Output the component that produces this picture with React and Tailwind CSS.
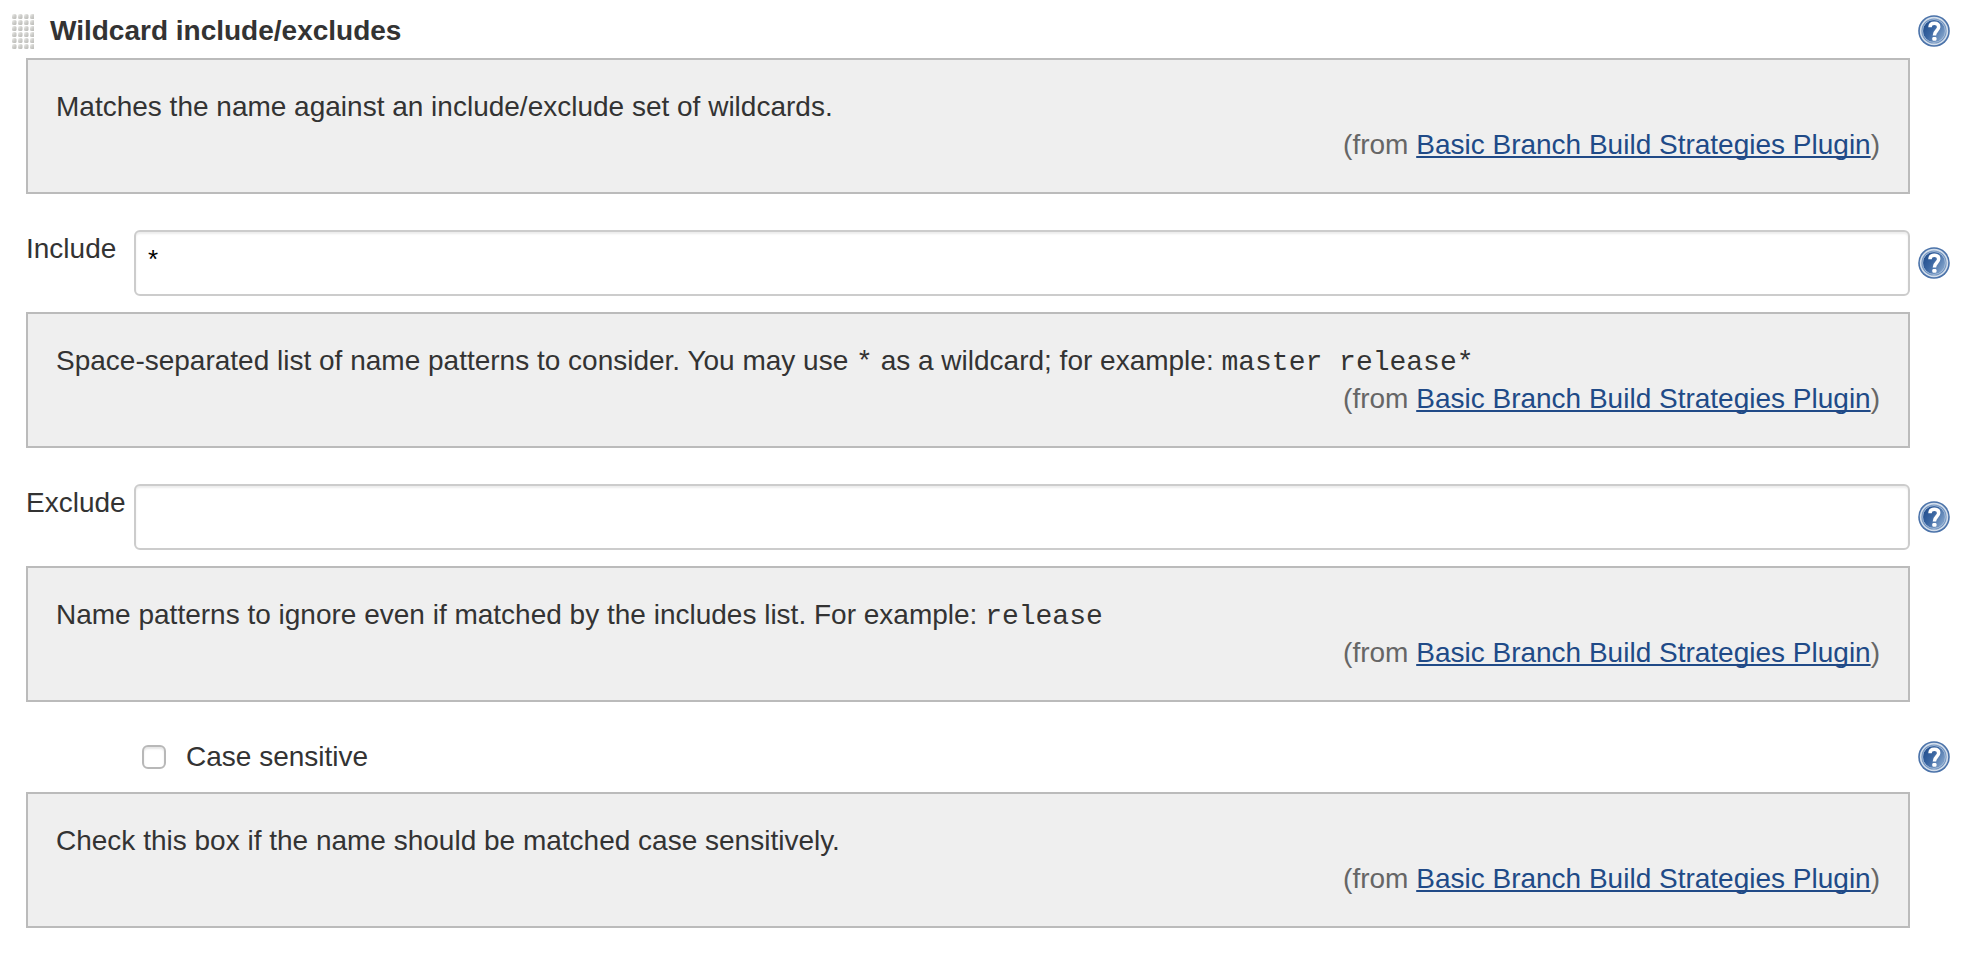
import { useId } from "react";

function HelpButton({ label }) {
  const id = useId();
  return (
    <button type="button" aria-label={label} className="block size-8 shrink-0 cursor-pointer">
      <svg viewBox="0 0 32 32" className="size-8" aria-hidden="true">
        <defs>
          <linearGradient id={id} x1="0.05" y1="0.25" x2="0.95" y2="0.8">
            <stop offset="0" stopColor="#24508f" />
            <stop offset="0.4" stopColor="#3a66a2" />
            <stop offset="1" stopColor="#86a6cc" />
          </linearGradient>
        </defs>
        <circle cx="16" cy="16" r="15.8" fill="#4a72a9" />
        <circle cx="16" cy="16" r="13.4" fill="#6f92bf" stroke="#d3deeb" strokeWidth="1.6" />
        <circle cx="16" cy="16" r="11.4" fill={`url(#${id})`} stroke="#a9bfdb" strokeWidth="0.9" />
        <path
          d="M12 12.2 C12 9.4 13.8 8.2 16.3 8.2 C19.2 8.2 20.7 9.8 20.7 12 C20.7 15.4 16.4 15.6 16.4 20.4"
          fill="none"
          stroke="#fff"
          strokeWidth="3.5"
        />
        <rect x="14.3" y="22" width="4.2" height="3.8" rx="1.2" fill="#fff" />
      </svg>
    </button>
  );
}

function DragHandle() {
  const id = useId();
  const columns = [0, 6, 12, 18];
  const rows = [0, 6, 12, 18, 24, 30];
  return (
    <svg viewBox="0 0 22 36" className="h-9 w-[22px] shrink-0" aria-hidden="true">
      <defs>
        <linearGradient id={id} x1="0" y1="0" x2="0.8" y2="1">
          <stop offset="0" stopColor="#f4f4f2" />
          <stop offset="0.5" stopColor="#d0d0cd" />
          <stop offset="1" stopColor="#bcbcb8" />
        </linearGradient>
      </defs>
      {rows.map((y) =>
        columns.map((x) => (
          <rect key={`${x}-${y}`} x={x} y={y + 1} width="4.5" height="5" rx="1.5" fill={`url(#${id})`} />
        ))
      )}
    </svg>
  );
}

function HelpBox({ children }) {
  return (
    <div className="mr-[52px] ml-[26px] border-2 border-[#bbb] bg-[#efefef] p-7">
      <p>{children}</p>
      <p className="text-right text-[#666]">
        (from{" "}
        <a href="#plugin" className="text-[#204a87] underline decoration-2 underline-offset-2 [text-decoration-skip-ink:none]">
          Basic Branch Build Strategies Plugin
        </a>
        )
      </p>
    </div>
  );
}

function Code({ children }) {
  return <code className="font-['Liberation_Mono',monospace] text-[28px] leading-none">{children}</code>;
}

function TextRow({ id, label, value, help }) {
  return (
    <div className="mt-9 mb-4 flex pr-3 pl-[26px]">
      <label htmlFor={id} className="w-[108px] shrink-0">
        {label}
      </label>
      <input
        id={id}
        type="text"
        defaultValue={value}
        className="h-[66px] min-w-0 flex-1 rounded-md border-2 border-[#ccc] bg-white px-3 pb-2 text-[26px] text-black shadow-[inset_0_2px_2px_rgba(0,0,0,0.075)]"
      />
      <div className="ml-2 self-center">
        <HelpButton label={help} />
      </div>
    </div>
  );
}

export default function App() {
  return (
    <main className="min-h-screen bg-white font-['Liberation_Sans',Arial,sans-serif] text-[28px] leading-[38px] text-[#333]">
      <header className="flex items-center pt-3 pr-3 pb-2 pl-3">
        <DragHandle />
        <h1 className="ml-4 flex-1 font-bold">Wildcard include/excludes</h1>
        <HelpButton label="Help for Wildcard include/excludes" />
      </header>
      <HelpBox>Matches the name against an include/exclude set of wildcards.</HelpBox>

      <TextRow id="include" label="Include" value="*" help="Help for Include" />
      <HelpBox>
        Space-separated list of name patterns to consider. You may use <Code>*</Code> as a wildcard; for example:{" "}
        <Code>master release*</Code>
      </HelpBox>

      <TextRow id="exclude" label="Exclude" value="" help="Help for Exclude" />
      <HelpBox>
        Name patterns to ignore even if matched by the includes list. For example: <Code>release</Code>
      </HelpBox>

      <div className="mt-9 mb-4 flex items-center pr-3 pl-[142px]">
        <input
          id="case-sensitive"
          type="checkbox"
          className="size-6 shrink-0 appearance-none rounded-md border-2 border-[#b8b8b8] bg-white shadow-[inset_0_2px_2px_rgba(0,0,0,0.1)] checked:bg-[#204a87]"
        />
        <label htmlFor="case-sensitive" className="ml-5 flex-1">
          Case sensitive
        </label>
        <HelpButton label="Help for Case sensitive" />
      </div>
      <HelpBox>Check this box if the name should be matched case sensitively.</HelpBox>
    </main>
  );
}
